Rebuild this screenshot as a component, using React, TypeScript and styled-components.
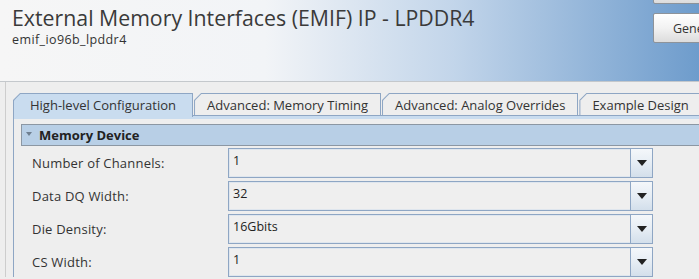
import React from "react";
import styled, { createGlobalStyle } from "styled-components";

const Global = createGlobalStyle`
  html, body { margin: 0; padding: 0; }
  body {
    background: #eeeeee;
    font-family: "Open Sans", "Noto Sans", "DejaVu Sans", sans-serif;
    color: #333333;
    overflow: hidden;
  }
`;

const Page = styled.div`
  width: 699px;
  height: 279px;
  overflow: hidden;
  background: #eeeeee;
`;

const Header = styled.header`
  height: 81px;
  display: flex;
  justify-content: space-between;
  align-items: flex-start;
  background: linear-gradient(to right, #f6f6f6 0%, #f2f4f7 38%, #c2d5ea 65%, #6e9ccc 100%);
  border-bottom: 1px solid #c4c8cc;
  overflow: hidden;
`;

const TitleBlock = styled.div`
  padding: 3px 0 0 12px;
`;

const Title = styled.h1`
  margin: 0;
  font-size: 21.3px;
  font-weight: 400;
  line-height: 29px;
  color: #3a3a3a;
  white-space: nowrap;
`;

const Subtitle = styled.div`
  font-size: 12.5px;
  letter-spacing: 0.4px;
  line-height: 16px;
  color: #333;
`;

const ButtonColumn = styled.div`
  display: flex;
  flex-direction: column;
  gap: 9px;
  margin-top: -26px;
  flex-shrink: 0;
  width: 46px;
`;

const HeaderButton = styled.div`
  width: 120px;
  height: 30px;
  flex-shrink: 0;
  box-sizing: border-box;
  border: 1px solid #8d939a;
  border-radius: 2px;
  background: linear-gradient(to bottom, #ffffff 0%, #f2f2f2 50%, #dcdcdc 100%);
  font-size: 12.5px;
  color: #333;
  display: flex;
  align-items: center;
  padding-left: 19px;
  white-space: nowrap;
`;

const Body = styled.div`
  margin-left: 5px;
  border-left: 1px solid #cdcdcd;
  padding: 11px 0 0 7px;
`;

const TabBar = styled.div`
  display: flex;
  gap: 1px;
  height: 23px;
  position: relative;
  z-index: 1;
`;

const cut = 7;

const Tab = styled.div<{ $active?: boolean }>`
  position: relative;
  height: ${(p) => (p.$active ? 24 : 23)}px;
  padding: 0 ${(p) => (p.$active ? 17 : 13)}px;
  display: flex;
  align-items: center;
  font-size: 13px;
  color: #333;
  white-space: nowrap;
  flex-shrink: 0;
  background: #8ea6c4;
  clip-path: polygon(${cut}px 0, 100% 0, 100% 100%, 0 100%, 0 ${cut}px);
  &::before {
    content: "";
    position: absolute;
    left: 1px;
    top: 1px;
    right: 1px;
    bottom: ${(p) => (p.$active ? 0 : 1)}px;
    background: ${(p) => (p.$active ? "#c9dcef" : "#eeeeee")};
    clip-path: polygon(${cut - 0.6}px 0, 100% 0, 100% 100%, 0 100%, 0 ${cut - 0.6}px);
  }
`;

const TabLabel = styled.span`
  position: relative;
`;

const Content = styled.div`
  border-left: 1px solid #8ea6c4;
  border-top: 1px solid #8ea6c4;
  margin-top: -1px;
`;

const ContentInner = styled.div`
  border-top: 3px solid #c9dcef;
  padding: 5px 0 0 7px;
`;

const SectionHeader = styled.div`
  height: 20px;
  display: flex;
  align-items: center;
  gap: 7px;
  padding-left: 4px;
  background: #b8cfe6;
  border: 1px solid #8c97a3;
  border-right: none;
  font-size: 13px;
  font-weight: 700;
  color: #222;
`;

const Triangle = styled.span`
  width: 0;
  height: 0;
  border-left: 3.5px solid transparent;
  border-right: 3.5px solid transparent;
  border-top: 4px solid #6f7f90;
  margin-bottom: 2px;
`;

const Rows = styled.div`
  display: flex;
  flex-direction: column;
  gap: 3px;
  padding-top: 2px;
`;

const Row = styled.div`
  display: grid;
  grid-template-columns: 207px 425px;
  align-items: center;
  height: 30px;
`;

const Label = styled.div`
  font-size: 13px;
  letter-spacing: 0.2px;
  color: #333;
  padding-left: 11px;
`;

const Combo = styled.div`
  display: flex;
  height: 30px;
  box-sizing: border-box;
  border: 1px solid #8ea6c4;
  box-shadow: inset 0 0 0 1px #dfe6ee;
  background: #efefef;
`;

const ComboText = styled.div`
  flex: 1;
  font-size: 12.5px;
  color: #222;
  padding: 4px 0 0 4px;
  line-height: 16px;
`;

const ComboButton = styled.div`
  width: 21px;
  border-left: 1px solid #8ea6c4;
  background: linear-gradient(to bottom, #f4f7fa 0%, #e6edf4 50%, #d3dfeb 100%);
  display: flex;
  align-items: center;
  justify-content: center;
`;

const Arrow = styled.span`
  width: 0;
  height: 0;
  border-left: 5px solid transparent;
  border-right: 5px solid transparent;
  border-top: 6px solid #222;
`;

const tabs = [
  "High-level Configuration",
  "Advanced: Memory Timing",
  "Advanced: Analog Overrides",
  "Example Design",
];

const fields = [
  { label: "Number of Channels:", value: "1" },
  { label: "Data DQ Width:", value: "32" },
  { label: "Die Density:", value: "16Gbits" },
  { label: "CS Width:", value: "1" },
];

export default function App() {
  return (
    <Page>
      <Global />
      <Header>
        <TitleBlock>
          <Title>External Memory Interfaces (EMIF) IP - LPDDR4</Title>
          <Subtitle>emif_io96b_lpddr4</Subtitle>
        </TitleBlock>
        <ButtonColumn>
          <HeaderButton aria-label="Finish" />
          <HeaderButton>Generate HDL...</HeaderButton>
        </ButtonColumn>
      </Header>
      <Body>
        <TabBar>
          {tabs.map((t, i) => (
            <Tab key={t} $active={i === 0}>
              <TabLabel>{t}</TabLabel>
            </Tab>
          ))}
        </TabBar>
        <Content>
          <ContentInner>
            <SectionHeader>
              <Triangle />
              Memory Device
            </SectionHeader>
            <Rows>
              {fields.map((f) => (
                <Row key={f.label}>
                  <Label>{f.label}</Label>
                  <Combo>
                    <ComboText>{f.value}</ComboText>
                    <ComboButton>
                      <Arrow />
                    </ComboButton>
                  </Combo>
                </Row>
              ))}
            </Rows>
          </ContentInner>
        </Content>
      </Body>
    </Page>
  );
}
